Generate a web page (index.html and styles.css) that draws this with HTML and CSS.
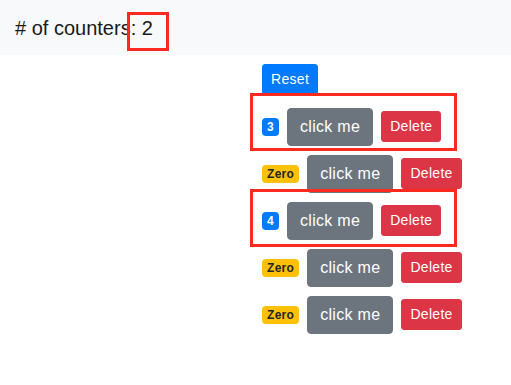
FILE: index.html
```html
<!DOCTYPE html>
<html lang="en">
<head>
<meta charset="utf-8">
<title>Counters</title>
<link rel="stylesheet" href="styles.css">
</head>
<body>
<nav class="navbar">
  <span class="brand"># of counters: <span class="total">2<span class="mark mark-total"></span></span></span>
</nav>
<main class="content">
  <button class="btn btn-sm btn-primary">Reset</button>
  <div class="rows">
    <div class="row">
      <span class="badge badge-primary">3</span>
      <button class="btn btn-secondary">click me</button>
      <button class="btn btn-sm btn-danger">Delete</button>
      <span class="mark mark-row mark-first"></span>
    </div>
    <div class="row">
      <span class="badge badge-warning">Zero</span>
      <button class="btn btn-secondary">click me</button>
      <button class="btn btn-sm btn-danger">Delete</button>
    </div>
    <div class="row">
      <span class="badge badge-primary">4</span>
      <button class="btn btn-secondary">click me</button>
      <button class="btn btn-sm btn-danger">Delete</button>
      <span class="mark mark-row mark-second"></span>
    </div>
    <div class="row">
      <span class="badge badge-warning">Zero</span>
      <button class="btn btn-secondary">click me</button>
      <button class="btn btn-sm btn-danger">Delete</button>
    </div>
    <div class="row">
      <span class="badge badge-warning">Zero</span>
      <button class="btn btn-secondary">click me</button>
      <button class="btn btn-sm btn-danger">Delete</button>
    </div>
  </div>
</main>
</body>
</html>
```

FILE: styles.css
```css
* { box-sizing: border-box; }

body {
  margin: 0;
  font-family: "Liberation Sans", Arial, sans-serif;
  color: #212529;
  background: #fff;
}

.navbar {
  height: 55px;
  background: #f8f9fa;
  padding: 13px 15px 0;
}

.brand {
  font-size: 20px;
  line-height: 30px;
  color: #1a1a1a;
  display: inline-block;
}

.total { position: relative; }

.mark {
  position: absolute;
  border: 3px solid #ff2a1f;
  pointer-events: none;
}

.mark-total {
  left: -15px;
  top: -5px;
  width: 42px;
  height: 39px;
}

.content {
  padding: 9px 0 0 262px;
}

.btn {
  display: inline-block;
  border: 1px solid transparent;
  color: #fff;
  font-family: "Liberation Sans", Arial, sans-serif;
  font-size: 16px;
  line-height: 24px;
  padding: 6px 12px;
  border-radius: 4px;
  letter-spacing: 0.3px;
  cursor: pointer;
}

.btn-sm {
  font-size: 14px;
  line-height: 21px;
  padding: 4px 8px;
  border-radius: 3px;
}

.btn-primary { background: #007bff; border-color: #007bff; }
.btn-secondary { background: #6c757d; border-color: #6c757d; }
.btn-danger { background: #dc3545; border-color: #dc3545; }

.rows {
  margin-top: 8px;
  display: flex;
  flex-direction: column;
}

.row {
  position: relative;
  height: 47px;
  display: flex;
  align-items: center;
  gap: 8px;
}

.badge {
  display: inline-block;
  font-size: 12px;
  font-weight: 700;
  line-height: 12px;
  padding: 3px 5px;
  border-radius: 4px;
  letter-spacing: 0.3px;
}

.badge-primary { background: #007bff; color: #fff; }
.badge-warning { background: #ffc107; color: #212529; }

.mark-row {
  left: -12px;
  width: 207px;
  height: 58px;
}

.mark-first { top: -10px; }
.mark-second { top: -8px; }
```
